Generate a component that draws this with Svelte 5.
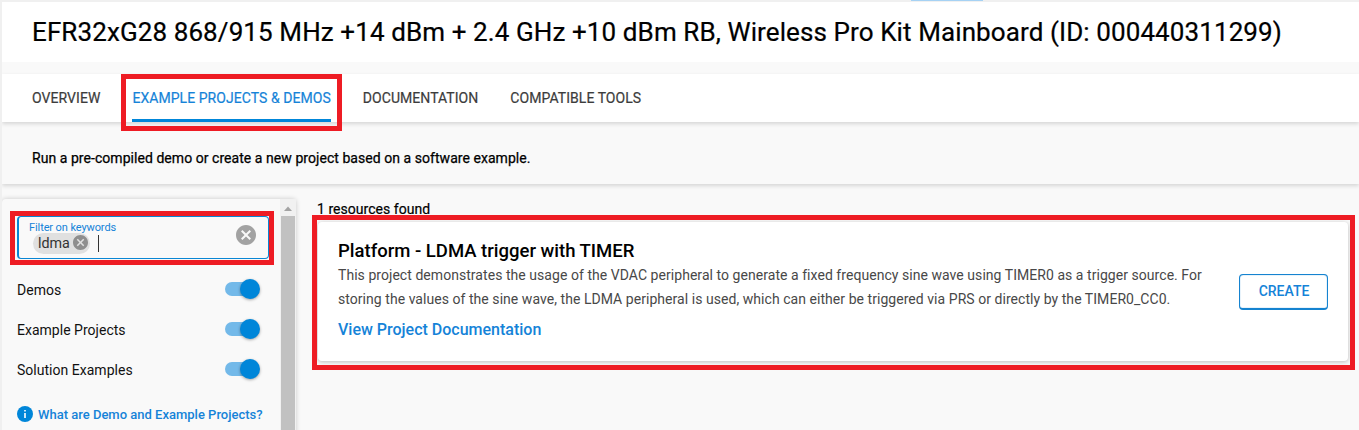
<script>
  const tabs = [
    { label: 'OVERVIEW' },
    { label: 'EXAMPLE PROJECTS & DEMOS', active: true },
    { label: 'DOCUMENTATION' },
    { label: 'COMPATIBLE TOOLS' }
  ];
  let filters = $state([
    { label: 'Demos', on: true },
    { label: 'Example Projects', on: true },
    { label: 'Solution Examples', on: true }
  ]);
</script>

{#snippet cancel(size)}
  <svg class="cancel" width={size} height={size} viewBox="2 2 20 20" aria-hidden="true">
    <path d="M12 2C6.47 2 2 6.47 2 12s4.47 10 10 10 10-4.47 10-10S17.53 2 12 2zm5 13.59L15.59 17 12 13.41 8.41 17 7 15.59 10.59 12 7 8.41 8.41 7 12 10.59 15.59 7 17 8.41 13.41 12 17 15.59z" />
  </svg>
{/snippet}

<div class="page">
  <div class="edge"></div>
  <header><h1>EFR32xG28 868/915 MHz +14 dBm + 2.4 GHz +10 dBm RB, Wireless Pro Kit Mainboard (ID: 000440311299)</h1></header>
  <nav>
    {#each tabs as tab}
      <div class="tab" class:active={tab.active}>
        <span>{tab.label}</span>
        {#if tab.active}<i class="mark"></i>{/if}
      </div>
    {/each}
  </nav>
  <div class="intro">Run a pre-compiled demo or create a new project based on a software example.</div>
  <main>
    <aside>
      <div class="controls">
        <div class="field">
          <div class="entry">
            <span class="hint">Filter on keywords</span>
            <div class="chips">
              <span class="chip">ldma{@render cancel(15)}</span>
              <span class="caret"></span>
            </div>
          </div>
          {@render cancel(20)}
          <i class="mark"></i>
        </div>
        {#each filters as f}
          <div class="filter">
            <span>{f.label}</span>
            <button class="switch" class:on={f.on} aria-label={f.label} onclick={() => (f.on = !f.on)}><i></i></button>
          </div>
        {/each}
        <div class="help">
          <svg width="16" height="16" viewBox="0 0 16 16" aria-hidden="true">
            <circle cx="8" cy="8" r="8" fill="#0086d9" />
            <path d="M7.2 4h1.6v1.6H7.2zM7.2 7h1.6v5H7.2z" fill="#fff" />
          </svg>
          <span>What are Demo and Example Projects?</span>
        </div>
      </div>
      <div class="scroll">
        <svg width="16" height="17" viewBox="0 0 16 17" aria-hidden="true"><path d="M4 12 8 7.5 12 12z" fill="#a3a3a3" /></svg>
        <div class="thumb"></div>
      </div>
    </aside>
    <section>
      <div class="count">1 resources found</div>
      <article>
        <div class="info">
          <h2>Platform - LDMA trigger with TIMER</h2>
          <p>
            This project demonstrates the usage of the VDAC peripheral to generate a fixed frequency sine wave using TIMER0 as a trigger source. For<br />
            storing the values of the sine wave, the LDMA peripheral is used, which can either be triggered via PRS or directly by the TIMER0_CC0.
          </p>
          <div class="doc"><span>View Project Documentation</span></div>
        </div>
        <button class="create">CREATE</button>
        <i class="mark"></i>
      </article>
    </section>
  </main>
</div>

<style>
  :global(body) { background: #f9f9f9; }
  .page {
    height: 430px;
    overflow: hidden;
    display: flex;
    flex-direction: column;
    box-sizing: border-box;
    border-left: 2px solid #f0f0f0;
    background: #f9f9f9;
    color: #000;
    font-family: Roboto, sans-serif;
  }
  .page * { box-sizing: border-box; }
  .edge {
    flex: none;
    height: 2px;
    background: linear-gradient(#a6d2f4, #a6d2f4) 909px 0 / 72px 1px no-repeat #f0f0f0;
  }
  header {
    flex: none;
    height: 60px;
    padding-left: 30px;
    background: #fff;
  }
  h1 {
    margin: 0;
    font-size: 26px;
    font-weight: 400;
    letter-spacing: 0.1px;
    line-height: 60px;
    white-space: nowrap;
    -webkit-text-stroke: 0.22px #000;
  }
  nav {
    flex: none;
    position: relative;
    display: flex;
    gap: 32px;
    height: 48px;
    margin-top: 12px;
    padding-left: 30px;
    background: #fff;
    box-shadow: 0 2px 4px rgba(0, 0, 0, 0.14);
  }
  .tab {
    position: relative;
    font-size: 14px;
    letter-spacing: 0.055px;
    line-height: 48px;
    color: #3c3c3c;
    white-space: nowrap;
    -webkit-text-stroke: 0.2px currentColor;
  }
  .tab.active {
    color: #1583d8;
    box-shadow: inset 0 -3px #0086d9;
  }
  .mark {
    position: absolute;
    border: 5px solid #ee1c24;
    pointer-events: none;
  }
  .tab .mark { inset: 0 -11px -9px -11px; }
  .intro {
    flex: none;
    height: 62px;
    padding: 6px 0 0 30px;
    font-size: 14px;
    letter-spacing: 0.05px;
    line-height: 61px;
    box-shadow: 0 2px 4px rgba(0, 0, 0, 0.14);
    -webkit-text-stroke: 0.25px #000;
  }
  main {
    display: flex;
    padding-top: 15px;
    height: 246px;
  }
  aside {
    display: flex;
    flex: none;
    width: 294px;
    height: 240px;
    border-radius: 4px 4px 0 0;
    box-shadow: 0 0 5px rgba(0, 0, 0, 0.2);
  }
  .controls {
    flex: none;
    width: 278px;
    padding: 17px 10px 0 15px;
  }
  .field {
    position: relative;
    display: flex;
    justify-content: space-between;
    width: 252px;
    height: 43px;
    padding: 8px 12px 0 10px;
    border: 1px solid #0a86d4;
    border-left-width: 2px;
    border-radius: 4px;
  }
  .field .mark { inset: -6px -6px -7px -9px; }
  .hint {
    display: block;
    height: 7px;
    font-size: 11px;
    letter-spacing: -0.1px;
    line-height: 6px;
    color: #1583d8;
    white-space: nowrap;
  }
  .chips {
    display: flex;
    align-items: center;
    gap: 8px;
    padding: 1px 0 0 4px;
  }
  .chip {
    display: flex;
    align-items: center;
    gap: 3px;
    height: 21px;
    padding: 0 2px 2px 5px;
    border-radius: 11px;
    background: #e0e0e0;
    font-size: 14.3px;
    color: #333;
  }
  .caret {
    width: 1px;
    height: 17px;
    background: #333;
  }
  .cancel {
    flex: none;
    fill: #a2a2a2;
  }
  .chip .cancel { fill: #8e8e8e; }
  .filter {
    display: flex;
    align-items: center;
    justify-content: space-between;
    height: 40px;
    padding-right: 11px;
    font-size: 14px;
    letter-spacing: 0.02px;
    color: #111;
  }
  .field + .filter { margin-top: 11px; }
  .switch {
    position: relative;
    width: 34px;
    height: 14px;
    margin-bottom: 2px;
    padding: 0;
    border: 0;
    border-radius: 7px;
    background: #c4c4c4;
  }
  .switch.on { background: #73b9e9; }
  .switch i {
    position: absolute;
    top: -3px;
    left: 0;
    width: 20px;
    height: 20px;
    border-radius: 50%;
    background: #fff;
    box-shadow: 0 1px 3px rgba(0, 0, 0, 0.35);
  }
  .switch.on i {
    left: 15px;
    background: #0086d9;
  }
  .help {
    display: flex;
    align-items: center;
    gap: 5px;
    margin-top: 16px;
    font-size: 13px;
    font-weight: 500;
    color: #1583d8;
    white-space: nowrap;
  }
  .help svg { flex: none; }
  .scroll {
    display: flex;
    flex-direction: column;
    align-items: center;
    width: 16px;
    background: #f1f1f1;
  }
  .scroll svg { flex: none; }
  .thumb {
    width: 14px;
    flex: 1;
    background: #c1c1c1;
  }
  section {
    flex: 1;
    padding: 0 11px 0 22px;
  }
  .count {
    height: 23px;
    margin-left: -1px;
    font-size: 14px;
    letter-spacing: 0.04px;
    line-height: 20px;
    -webkit-text-stroke: 0.2px #000;
  }
  article {
    position: relative;
    display: flex;
    justify-content: space-between;
    height: 139px;
    padding: 17px 20px 0 20px;
    border-radius: 4px;
    background: #fff;
    box-shadow: 0 1px 4px rgba(0, 0, 0, 0.25);
  }
  article .mark { inset: -7px -7px -9px -6px; }
  h2 {
    margin: 0;
    font-size: 18.5px;
    font-weight: 500;
    line-height: 24px;
    white-space: nowrap;
  }
  p {
    margin: 0;
    font-size: 14px;
    letter-spacing: 0.048px;
    line-height: 24px;
    color: #484848;
    white-space: nowrap;
  }
  .doc {
    margin-top: 7px;
    font-size: 16px;
    font-weight: 500;
    line-height: 24px;
    color: #1583d8;
  }
  .create {
    width: 89px;
    height: 36px;
    margin-top: 35px;
    padding: 0 0 1px 1px;
    border: 1px solid #1583d0;
    border-bottom-width: 2px;
    border-radius: 4px;
    background: #fff;
    box-shadow: inset 0 0 1px #1583d0;
    font: 500 14px Roboto, sans-serif;
    color: #1583d8;
  }
</style>
